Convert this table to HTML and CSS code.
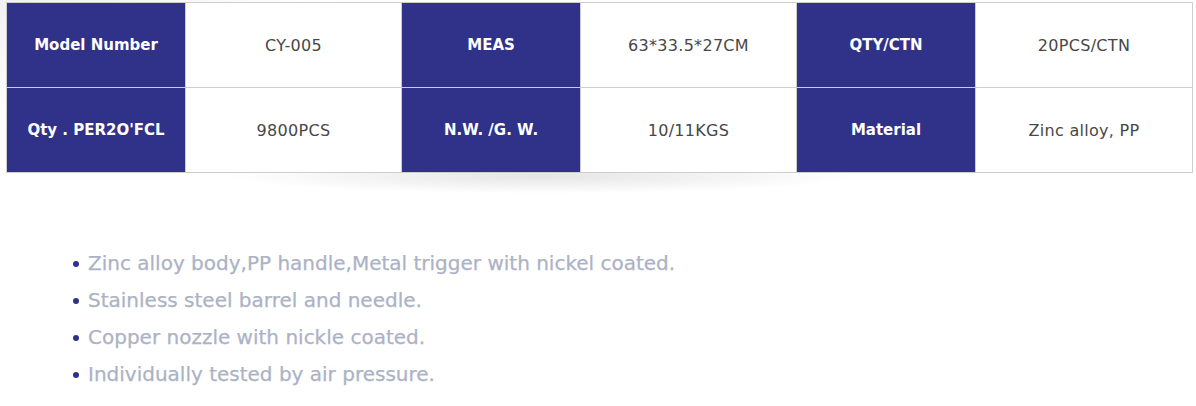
FILE: index.html
```html
<!DOCTYPE html>
<html>
<head>
<meta charset="utf-8">
<link rel="stylesheet" href="styles.css">
</head>
<body>
<div class="page">
  <div class="table-wrap">
    <table class="spec">
      <tr>
        <th>Model Number</th><td>CY-005</td>
        <th>MEAS</th><td>63*33.5*27CM</td>
        <th>QTY/CTN</th><td>20PCS/CTN</td>
      </tr>
      <tr>
        <th>Qty . PER2O'FCL</th><td>9800PCS</td>
        <th>N.W. /G. W.</th><td>10/11KGS</td>
        <th>Material</th><td>Zinc alloy, PP</td>
      </tr>
    </table>
    <div class="shadow"></div>
  </div>
  <ul class="features">
    <li>Zinc alloy body,PP handle,Metal trigger with nickel coated.</li>
    <li>Stainless steel barrel and needle.</li>
    <li>Copper nozzle with nickle coated.</li>
    <li>Individually tested by air pressure.</li>
  </ul>
</div>
</body>
</html>
```
FILE: styles.css
```css
html, body {
  margin: 0;
  padding: 0;
  background: #fff;
}
.page {
  width: 1196px;
  height: 406px;
  overflow: hidden;
  font-family: "DejaVu Sans", "Open Sans", sans-serif;
  padding: 2px 0 0 6px;
  box-sizing: border-box;
  background: linear-gradient(160deg, #f1f1f3 0px, #ffffff 120px);
}
.table-wrap {
  position: relative;
  width: 1187px;
}
.spec {
  position: relative;
  z-index: 1;
  border-collapse: collapse;
  width: 1187px;
  table-layout: fixed;
  background: #fff;
}
.spec th, .spec td {
  border: 1px solid #cdcdcd;
  height: 84px;
  padding: 0;
  text-align: center;
  vertical-align: middle;
}
.spec th {
  background: #303189;
  color: #fff;
  font-weight: bold;
  font-size: 15px;
}
.spec td {
  color: #474747;
  font-weight: 400;
  font-size: 16px;
  letter-spacing: 0.3px;
}
.spec th:nth-child(1) { width: 178px; }
.spec td:nth-child(2) { width: 215px; }
.spec th:nth-child(3) { width: 178px; }
.spec td:nth-child(4) { width: 215px; }
.spec th:nth-child(5) { width: 178px; }
.shadow {
  position: absolute;
  left: 220px;
  top: 152px;
  width: 630px;
  height: 44px;
  background: radial-gradient(ellipse 50% 40% at 50% 50%, rgba(0,0,0,0.10), rgba(0,0,0,0) 100%);
  z-index: 0;
}
.features {
  list-style: none;
  margin: 72px 0 0 0;
  padding: 0 0 0 66px;
}
.features li {
  position: relative;
  padding-left: 16px;
  font-size: 20px;
  line-height: 37px;
  color: #acb2c5;
  -webkit-text-stroke: 0.25px #acb2c5;
}
.features li::before {
  content: "";
  position: absolute;
  left: 1px;
  top: 16px;
  width: 6px;
  height: 6px;
  border-radius: 50%;
  background: #303189;
}
```
